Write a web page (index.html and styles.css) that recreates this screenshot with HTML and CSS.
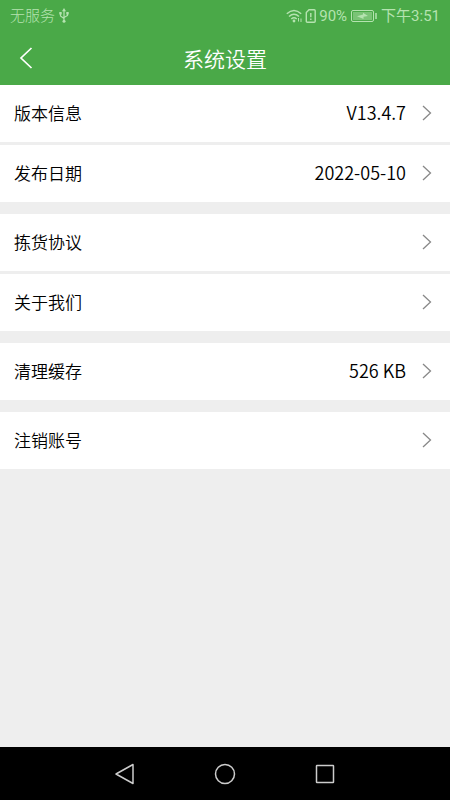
FILE: index.html
```html
<!DOCTYPE html>
<html lang="zh-CN">
<head>
<meta charset="utf-8">
<meta name="viewport" content="width=device-width, initial-scale=1">
<title>系统设置</title>
<link rel="stylesheet" href="styles.css">
</head>
<body>
<svg class="sprite">
  <symbol id="chevron" viewBox="0 0 10 16"><path d="M1 1l7.500 7L1 15" fill="none" stroke="currentColor" stroke-width="1.300"/></symbol>
</svg>
<header class="top">
  <div class="status">
    <span>无服务</span>
    <svg class="usb" width="10" height="16" viewBox="0 0 10 16" fill="none" stroke="currentColor" stroke-width="1.200">
      <path d="M5 2v11M1.500 5v3L5 10.500M8.500 5v2.500L5 9.500"/>
      <path d="M5 0L3 3.200h4zM.3 4h2.400v2.400H.3zM7.300 4h2.400v2.400H7.300z" fill="currentColor" stroke="none"/>
      <circle cx="5" cy="13.300" r="1.500" fill="currentColor" stroke="none"/>
    </svg>
    <div class="indicators">
      <svg width="17" height="14" viewBox="0 0 17 14" fill="none" stroke="currentColor" stroke-width="1.500">
        <path d="M.8 4.800Q8 -1.800 15.200 4.800M3 7.500Q8 3 13 7.500M5.300 10Q8 7.500 10.700 10"/>
        <circle cx="8" cy="12" r="1.400" fill="currentColor" stroke="none"/>
        <path d="M12.500 9v3.500M15 9.500v3.500" stroke-width="1"/>
      </svg>
      <svg width="12" height="14" viewBox="0 0 12 14" fill="none" stroke="currentColor" stroke-width="1.400">
        <path d="M4 .8h5.200q1 0 1 1v10.400q0 1-1 1H2.300q-1 0-1-1V3.500zM5.800 4v4.200M5.800 9.500v1.500"/>
      </svg>
      <span>90%</span>
      <svg class="battery" width="26" height="12" viewBox="0 0 26 12" fill="none" stroke="currentColor">
        <rect x=".5" y=".5" width="22" height="11" rx="1.500"/>
        <rect x="2" y="2" width="19" height="8" fill="currentColor" fill-opacity=".45" stroke="none"/>
        <path d="M6 6.200l6-1.700V2.800l5 3.200-4.500.8V9z" fill="currentColor" stroke="none"/>
        <path d="M25 3v6" stroke-width="1.500"/>
      </svg>
      <span>下午3:51</span>
    </div>
  </div>
  <div class="titlebar">
    <button class="back" type="button" aria-label="返回">
      <svg width="14" height="22" viewBox="0 0 14 22"><path d="M12.500 1L2 11l10.500 10" fill="none" stroke="currentColor" stroke-width="1.700"/></svg>
    </button>
    <h1>系统设置</h1>
  </div>
</header>
<main class="settings">
  <section class="group">
    <a class="row" href="#version"><span>版本信息</span><span class="value">V13.4.7</span><svg class="chevron"><use href="#chevron"/></svg></a>
    <a class="row" href="#date"><span>发布日期</span><span class="value">2022-05-10</span><svg class="chevron"><use href="#chevron"/></svg></a>
  </section>
  <section class="group">
    <a class="row" href="#agreement"><span>拣货协议</span><svg class="chevron"><use href="#chevron"/></svg></a>
    <a class="row" href="#about"><span>关于我们</span><svg class="chevron"><use href="#chevron"/></svg></a>
  </section>
  <section class="group">
    <a class="row" href="#cache"><span>清理缓存</span><span class="value">526 KB</span><svg class="chevron"><use href="#chevron"/></svg></a>
  </section>
  <section class="group">
    <a class="row" href="#account"><span>注销账号</span><svg class="chevron"><use href="#chevron"/></svg></a>
  </section>
</main>
<nav class="navbar">
  <button type="button" aria-label="后退"><svg width="22" height="22" viewBox="0 0 22 22"><path d="M19 1.500v19L2 11z"/></svg></button>
  <button type="button" aria-label="主页"><svg width="22" height="22" viewBox="0 0 22 22"><circle cx="11" cy="11" r="9.500"/></svg></button>
  <button type="button" aria-label="最近任务"><svg width="22" height="22" viewBox="0 0 22 22"><rect x="2.500" y="2.500" width="17" height="17" rx=".5"/></svg></button>
</nav>
</body>
</html>
```
FILE: styles.css
```css
* {
  box-sizing: border-box;
}

body {
  margin: 0;
  min-height: 100vh;
  display: flex;
  flex-direction: column;
  background: #eee;
  color: #000;
  font-family: "Noto Sans CJK SC", sans-serif;
  font-weight: 350;
}

button {
  display: flex;
  padding: 0;
  border: 0;
  background: none;
  color: inherit;
}

.sprite {
  display: none;
}

.top {
  background: #4aa948;
  color: #fff;
}

.status {
  display: flex;
  align-items: center;
  height: 32px;
  padding: 0 10px;
  color: #b5e3b0;
  font: 400 15px/32px Roboto, "Noto Sans CJK SC", sans-serif;
}

.status > span {
  font-weight: 300;
}

.usb {
  margin-left: 4px;
}

.indicators {
  display: flex;
  align-items: center;
  margin-left: auto;
}

.indicators svg {
  margin-right: 2px;
}

.indicators .battery {
  margin: 0 4px 0 4px;
}

.titlebar {
  display: grid;
  grid-template-columns: 1fr auto 1fr;
  align-items: center;
  height: 53px;
  padding: 0 19px 2px;
}

.back {
  justify-self: start;
}

h1 {
  margin: 0;
  font-size: 21px;
  font-weight: 350;
  line-height: 30px;
}

.settings {
  flex: 1;
  display: flex;
  flex-direction: column;
  gap: 12px;
}

.group {
  display: flex;
  flex-direction: column;
  gap: 3px;
}

.row {
  display: flex;
  align-items: center;
  padding: 15px 18px 17px 14px;
  background: #fff;
  color: inherit;
  font-size: 17px;
  line-height: 25px;
  text-decoration: none;
}

.value {
  margin-left: auto;
  font-size: 18px;
}

.chevron {
  width: 10px;
  height: 16px;
  margin-left: 16px;
  color: #888;
}

.row > span:first-child + .chevron {
  margin-left: auto;
}

.navbar {
  display: flex;
  justify-content: center;
  align-items: center;
  gap: 78px;
  height: 53px;
  background: #000;
  color: #ccc;
}

.navbar svg {
  fill: none;
  stroke: currentColor;
  stroke-width: 1.5;
  stroke-linejoin: round;
}
```
